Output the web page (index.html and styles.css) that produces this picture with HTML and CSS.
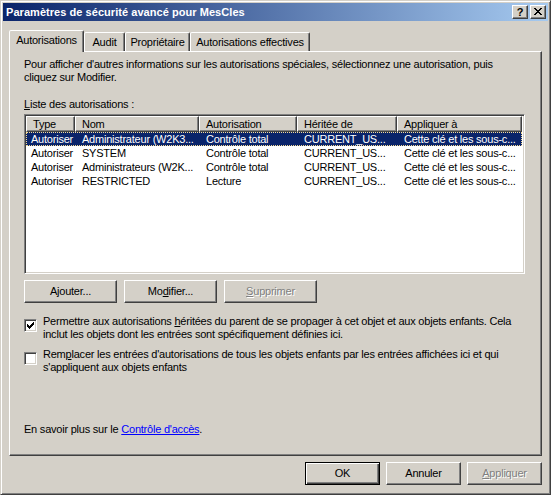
FILE: index.html
```html
<!DOCTYPE html>
<html lang="fr">
<head>
<meta charset="utf-8">
<title>Paramètres de sécurité avancé pour MesCles</title>
<link rel="stylesheet" href="styles.css">
</head>
<body>
<div class="window">
  <div class="titlebar">
    <span class="title">Paramètres de sécurité avancé pour MesCles</span>
    <div class="caption-buttons">
      <span class="cap-btn help">?</span>
      <span class="cap-btn close">
        <svg class="close-glyph" width="8" height="7" viewBox="0 0 8 7" shape-rendering="crispEdges">
          <rect x="0" y="0" width="2" height="1"/><rect x="6" y="0" width="2" height="1"/>
          <rect x="1" y="1" width="2" height="1"/><rect x="5" y="1" width="2" height="1"/>
          <rect x="2" y="2" width="4" height="1"/>
          <rect x="3" y="3" width="2" height="1"/>
          <rect x="2" y="4" width="4" height="1"/>
          <rect x="1" y="5" width="2" height="1"/><rect x="5" y="5" width="2" height="1"/>
          <rect x="0" y="6" width="2" height="1"/><rect x="6" y="6" width="2" height="1"/>
        </svg>
      </span>
    </div>
  </div>
  <div class="client">
    <div class="tabs">
      <div class="tab selected t-aut">Autorisations</div>
      <div class="tab t-audit">Audit</div>
      <div class="tab t-prop">Propriétaire</div>
      <div class="tab t-eff">Autorisations effectives</div>
    </div>
    <div class="panel">
      <p class="intro">Pour afficher d'autres informations sur les autorisations spéciales, sélectionnez une autorisation, puis<br>cliquez sur Modifier.</p>
      <div class="label"><u>L</u>iste des autorisations :</div>
      <div class="listview">
        <div class="lv-header">
          <div class="hcell c-type">Type</div>
          <div class="hcell c-nom">Nom</div>
          <div class="hcell c-aut">Autorisation</div>
          <div class="hcell c-her">Héritée de</div>
          <div class="hcell c-app">Appliquer à</div>
        </div>
        <div class="row selected">
          <div class="cell first c-type">Autoriser</div>
          <div class="cell c-nom">Administrateur (W2K3...</div>
          <div class="cell c-aut">Contrôle total</div>
          <div class="cell c-her">CURRENT_US...</div>
          <div class="cell c-app">Cette clé et les sous-c...</div>
        </div>
        <div class="row">
          <div class="cell first c-type">Autoriser</div>
          <div class="cell c-nom">SYSTEM</div>
          <div class="cell c-aut">Contrôle total</div>
          <div class="cell c-her">CURRENT_US...</div>
          <div class="cell c-app">Cette clé et les sous-c...</div>
        </div>
        <div class="row">
          <div class="cell first c-type">Autoriser</div>
          <div class="cell c-nom">Administrateurs (W2K...</div>
          <div class="cell c-aut">Contrôle total</div>
          <div class="cell c-her">CURRENT_US...</div>
          <div class="cell c-app">Cette clé et les sous-c...</div>
        </div>
        <div class="row">
          <div class="cell first c-type">Autoriser</div>
          <div class="cell c-nom">RESTRICTED</div>
          <div class="cell c-aut">Lecture</div>
          <div class="cell c-her">CURRENT_US...</div>
          <div class="cell c-app">Cette clé et les sous-c...</div>
        </div>
      </div>
      <div class="btnrow">
        <span class="btn wide">A<u>j</u>outer...</span>
        <span class="btn wide">Mo<u>d</u>ifier...</span>
        <span class="btn wide disabled"><u>S</u>upprimer</span>
      </div>
      <div class="check first-check">
        <span class="box">
          <svg width="7" height="7" viewBox="0 0 7 7" shape-rendering="crispEdges">
            <rect x="6" y="0" width="1" height="1"/>
            <rect x="5" y="1" width="2" height="1"/>
            <rect x="0" y="2" width="1" height="1"/><rect x="4" y="2" width="3" height="1"/>
            <rect x="0" y="3" width="2" height="1"/><rect x="3" y="3" width="3" height="1"/>
            <rect x="0" y="4" width="5" height="1"/>
            <rect x="1" y="5" width="3" height="1"/>
            <rect x="2" y="6" width="1" height="1"/>
          </svg>
        </span>
        <span class="check-text">Permettre aux autorisations <u>h</u>éritées du parent de se propager à cet objet et aux objets enfants. Cela<br>inclut les objets dont les entrées sont spécifiquement définies ici.</span>
      </div>
      <div class="check second-check">
        <span class="box"></span>
        <span class="check-text">Rem<u>p</u>lacer les entrées d'autorisations de tous les objets enfants par les entrées affichées ici et qui<br>s'appliquent aux objets enfants</span>
      </div>
      <div class="learn">En savoir plus sur le <a class="link" href="#">Contrôle d'accès</a>.</div>
    </div>
    <div class="dlg-buttons">
      <span class="btn default">OK</span>
      <span class="btn">Annuler</span>
      <span class="btn disabled"><u>A</u>ppliquer</span>
    </div>
  </div>
</div>
</body>
</html>
```
FILE: styles.css
```css
* { box-sizing: border-box; }
html, body { margin: 0; padding: 0; }
body {
  width: 551px;
  height: 495px;
  background: #d4d0c8;
  font-family: "Liberation Sans", Arial, sans-serif;
  font-size: 11px;
  line-height: 13px;
  letter-spacing: -0.22px;
  color: #000;
  overflow: hidden;
}
.window {
  width: 551px;
  height: 495px;
  border: 1px solid;
  border-color: #d4d0c8 #404040 #404040 #d4d0c8;
  box-shadow: inset 1px 1px #fff, inset -1px -1px #808080;
  padding: 2px;
  background: #d4d0c8;
  display: flex;
  flex-direction: column;
}
.titlebar {
  height: 18px;
  flex: none;
  background: linear-gradient(to right, #0a246a, #a6caf0);
  display: flex;
  align-items: center;
  justify-content: space-between;
  padding-left: 3px;
}
.title {
  color: #fff;
  font-weight: bold;
  font-size: 11px;
  letter-spacing: 0.05px;
  white-space: nowrap;
}
.caption-buttons { display: flex; gap: 2px; margin-right: 2px; }
.cap-btn {
  width: 16px;
  height: 14px;
  background: #d4d0c8;
  border: 1px solid;
  border-color: #fff #404040 #404040 #fff;
  box-shadow: inset -1px -1px #808080;
  display: flex;
  align-items: center;
  justify-content: center;
}
.help { font-weight: bold; font-size: 11px; line-height: 12px; padding-bottom: 1px; letter-spacing: 0; }
.close-glyph { display: block; fill: #000; margin-top: -1px; }

.client {
  flex: 1;
  display: flex;
  flex-direction: column;
  padding: 9px 6px 7px 6px;
}
.tabs {
  flex: none;
  height: 21px;
  display: flex;
  align-items: flex-end;
  position: relative;
  z-index: 1;
}
.tab {
  height: 19px;
  border: 1px solid;
  border-bottom: none;
  border-color: #fff #404040 transparent #fff;
  box-shadow: inset -1px 0 #808080;
  border-radius: 2px 2px 0 0;
  text-align: center;
  padding-top: 3px;
  white-space: nowrap;
  background: #d4d0c8;
}
.tab.selected { height: 22px; margin-bottom: -1px; }
.t-aut { width: 75px; }
.t-audit { width: 41px; }
.t-prop { width: 65px; }
.t-eff { width: 120px; }

.panel {
  flex: 1;
  border: 1px solid;
  border-color: #fff #404040 #404040 #fff;
  box-shadow: inset -1px -1px #808080;
  padding: 6px 14px 0 14px;
  display: flex;
  flex-direction: column;
}
.intro { margin: 0; white-space: nowrap; }
.label { margin-top: 14px; }
.listview {
  margin-top: 3px;
  width: 501px;
  height: 160px;
  flex: none;
  background: #fff;
  border: 1px solid;
  border-color: #808080 #fff #fff #808080;
  box-shadow: inset 1px 1px #404040, inset -1px -1px #d4d0c8;
  padding: 1px;
}
.lv-header { display: flex; height: 16px; }
.hcell {
  background: #d4d0c8;
  border: 1px solid;
  border-color: #fff #404040 #404040 #fff;
  box-shadow: inset -1px -1px #808080;
  padding: 1px 0 0 6px;
  white-space: nowrap;
  overflow: hidden;
}
.c-type { width: 49px; flex: none; }
.c-nom { width: 124px; flex: none; }
.c-aut { width: 98px; flex: none; }
.c-her { width: 100px; flex: none; }
.c-app { width: 125px; flex: none; }
.row { display: flex; height: 14px; line-height: 14px; width: 496px; position: relative; }
.cell { padding-left: 7px; white-space: nowrap; overflow: hidden; }
.cell.first { padding-left: 5px; }
.row.selected { background: #0a246a; color: #fff; }
.row.selected::after {
  content: "";
  position: absolute;
  inset: 0;
  border: 1px dotted #f5db95;
}

.btn {
  display: inline-flex;
  align-items: center;
  justify-content: center;
  width: 75px;
  height: 23px;
  background: #d4d0c8;
  border: 1px solid;
  border-color: #fff #404040 #404040 #fff;
  box-shadow: inset -1px -1px #808080;
  white-space: nowrap;
  flex: none;
}
.btn.wide { width: 93px; }
.btn.default {
  border-color: #000;
  box-shadow: inset 1px 1px #fff, inset -1px -1px #404040, inset -2px -2px #808080;
}
.btn.disabled { color: #808080; text-shadow: 1px 1px #fff; }
.btnrow { display: flex; gap: 7px; margin-top: 6px; }

.check { display: flex; align-items: flex-start; }
.first-check { margin-top: 12px; }
.second-check { margin-top: 7px; }
.box {
  width: 13px;
  height: 13px;
  flex: none;
  margin-top: 4px;
  margin-right: 6px;
  background: #fff;
  border: 1px solid;
  border-color: #808080 #fff #fff #808080;
  box-shadow: inset 1px 1px #404040, inset -1px -1px #d4d0c8;
  display: flex;
  align-items: center;
  justify-content: center;
}
.box svg { display: block; fill: #000; }
.check-text { white-space: nowrap; }
.learn { margin-top: 49px; }
.link { color: #0000ff; text-decoration: underline; }

.dlg-buttons {
  flex: none;
  display: flex;
  justify-content: flex-end;
  gap: 6px;
  margin-top: 6px;
}
```
